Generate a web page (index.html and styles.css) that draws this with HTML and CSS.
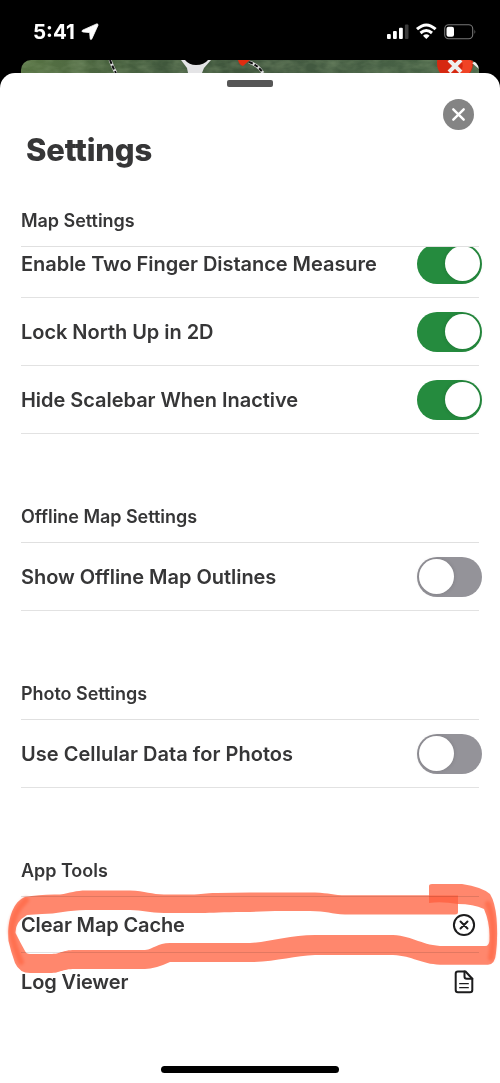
FILE: index.html
```html
<!DOCTYPE html>
<html lang="en">
<head>
<meta charset="utf-8">
<title>Settings</title>
<link rel="stylesheet" href="styles.css">
</head>
<body>
<div class="phone">
  <header class="status">
    <div class="clock"><span class="time">5:41</span>
      <svg class="arrow" width="18" height="18" viewBox="0 0 18 18"><path d="M15.600 .900 1.500 7.200Q.200 8.300 1.600 8.900L8 9.500Q8.600 9.500 8.700 10.200L9.200 15.900Q9.800 17.200 10.800 15.900L17 2.300Q17.200.600 15.600 .900Z" fill="#fff" stroke="#fff" stroke-width=".8"/></svg>
    </div>
    <svg class="signals" width="92" height="18" viewBox="0 0 92 18">
      <g fill="#fff"><rect x="1" y="11" width="3.8" height="5" rx="1"/><rect x="7" y="8" width="3.8" height="8" rx="1"/><rect x="13" y="4.700" width="3.800" height="11.300" rx="1"/></g>
      <rect x="18.900" y="1.500" width="3.600" height="14.500" rx="1" fill="#3b3b3b"/>
      <g fill="none" stroke="#fff" stroke-width="3"><path d="M31 6.200Q40.300 -2.300 49.600 6.200"/><path d="M34.500 10Q40.300 5 46 10"/></g>
      <path d="M37 12.700Q40.300 9.900 43.600 12.700L40.300 16Z" fill="#fff"/>
      <rect x="58.700" y="1.700" width="28" height="14" rx="4" fill="none" stroke="#777" stroke-width="1.100"/>
      <rect x="60.500" y="3.700" width="7.500" height="10" rx="2" fill="#fff"/><path d="M88.500 6.500Q90.100 8.700 88.500 11Z" fill="#777"/>
    </svg>
  </header>
  <svg class="map" width="458" height="13" viewBox="0 0 458 13">
    <defs>
      <linearGradient id="land"><stop stop-color="#587444"/><stop offset=".3" stop-color="#40583c"/><stop offset=".55" stop-color="#40563e"/><stop offset="1" stop-color="#4b6749"/></linearGradient>
      <filter id="terrain" x="0" y="0" width="100%" height="100%"><feTurbulence type="fractalNoise" baseFrequency=".06 .12" numOctaves="3" seed="4"/><feColorMatrix values="0 0 0 0 .33  0 0 0 0 .45  0 0 0 0 .25  1.4 0 0 0 -.45"/></filter>
    </defs>
    <rect width="458" height="13" fill="url(#land)"/>
    <rect width="458" height="13" filter="url(#terrain)" opacity=".45"/>
    <g fill="none"><path d="M89 0Q92 8 95 13M228 2Q237 5 242 13" stroke="#ddd" stroke-width="3"/><path d="M89 0Q92 8 95 13M228 2Q237 5 242 13" stroke="#111" stroke-width="2" stroke-dasharray="4 2"/></g>
    <path d="M160 0H190L183 8L181 13H167L166 8Z" fill="#e4e4e6"/><path d="M164 0H187Q183 5 175 5Q168 5 164 0Z" fill="#050505"/>
    <path d="M217 0H229L222 6Q218 5 217 0Z" fill="#e02c10"/>
    <circle cx="434" cy="3" r="18" fill="#d62810"/><path d="M440 0H450Q453 7 448 13H439Q444 6 440 0Z" fill="#f04325"/>
    <path d="m428 0 12 12m0-12-12 12" stroke="#eee" stroke-width="4"/><path d="m451 3 7 6V0Z" fill="#eee"/>
  </svg>
  <main class="sheet">
    <div class="handle"></div>
    <div class="topline">
      <h1>Settings</h1>
      <button class="close" aria-label="Close"><svg width="31" height="31" viewBox="0 0 31 31"><path d="m10.300 10.300 10.400 10.400m0-10.400-10.400 10.400" stroke="#fff" stroke-width="2.400" stroke-linecap="round"/></svg></button>
    </div>
    <section class="group first">
      <h2>Map Settings</h2>
      <div class="rows scrolled">
        <div class="row"><span>Enable Two Finger Distance Measure</span><i class="toggle on"></i></div>
        <div class="row"><span>Lock North Up in 2D</span><i class="toggle on"></i></div>
        <div class="row"><span>Hide Scalebar When Inactive</span><i class="toggle on"></i></div>
      </div>
    </section>
    <section class="group">
      <h2>Offline Map Settings</h2>
      <div class="row"><span>Show Offline Map Outlines</span><i class="toggle"></i></div>
    </section>
    <section class="group">
      <h2>Photo Settings</h2>
      <div class="row wide"><span>Use Cellular Data for Photos</span><i class="toggle"></i></div>
    </section>
    <section class="group tools">
      <h2>App Tools</h2>
      <div class="row"><span>Clear Map Cache</span>
        <svg class="icon" width="24" height="24" viewBox="0 0 24 24"><circle cx="12" cy="12" r="10.100"/><path d="m8.500 8.500 7 7m0-7-7 7"/></svg></div>
      <div class="row"><span>Log Viewer</span>
        <svg class="icon" width="24" height="24" viewBox="0 0 24 24"><path d="M12.500 1.500H6Q3.700 1.500 3.700 3.800V20Q3.700 22.300 6 22.300H18Q20.300 22.300 20.300 20V8.800L13.500 1.500Z"/><path d="M12.500 1.500V6.500Q12.500 8.800 14.800 8.800H20.300"/><path d="M7.700 13.700H16.300M7.700 17.700H16.300" stroke-width="1.300"/></svg></div>
    </section>
    <div class="home"></div>
  </main>
  <svg class="marker" width="500" height="100" viewBox="0 880 500 100">
    <path class="ink" fill-rule="evenodd" d="M25 897Q40 894 60 894.500C70 893 76 890.500 86 890.500H130C145 891 152 894.500 164 894.500H190C203 894.500 204 893 217 893L250 892.500H315C330 893 332 895.300 347 895.300H429V886Q429 884 432 884H462Q482 887 490 894Q495 902 496.500 918Q498 937 496 953Q495 964.700 488 964.700H440C421 964 413 956 393 955H315C295 955.500 275 962 250 962H170Q155 969 145 969H75C61 969 61 973 50 973H32Q20 974 15 963Q11 952 8.500 941C7 922 12 902 25 897ZM27 915Q15 922 15.500 933Q20 942 25 951Q26 954 30 954H50C62 954 61 950 75 950H145C154 949 157 943 170 943H250C270 942 290 935 315 935H393C414 936 422 946 444 946H485Q490 946 489.500 938Q490 923 484 909Q473 904 458 904V912Q458 914.500 455 914.500H345C331 914 327 911 310 911H275L250 912C230 912 216 912.500 205 913H164C149 913 143 910 130 910H86C68 910 57 914 42 914Z"/>
    <path class="overlap" d="M429 895.500H458V904Q441 901 429 903Z"/>
    <path class="edge" d="M26 900Q12 913 11.500 932Q14 947 21 962M488 904Q493 915 493 933Q493 947 491 958"/>
  </svg>
</div>
</body>
</html>
```

FILE: styles.css
```css
* { box-sizing: border-box; }
body { margin: 0; background: #000; font-family: Inter, "Liberation Sans", sans-serif; color: #363637; }
.phone { position: relative; width: 500px; height: 1083px; background: #000; overflow: hidden; display: flex; flex-direction: column; }
.status { height: 60px; flex: none; display: flex; justify-content: space-between; align-items: flex-start; padding: 22px 22px 0 33px; color: #fff; }
.clock { display: flex; gap: 6px; }
.time { font-size: 20.500px; line-height: 20px; font-weight: 700; }
.arrow { margin-top: 1px; }
.signals { margin-top: 1px; }
.map { display: block; flex: none; margin: 0 21px; border-radius: 10px 10px 0 0; }
.sheet { flex: 1; background: #fff; border-radius: 15px 15px 0 0; padding: 7px 21px 0; display: flex; flex-direction: column; }
.handle { width: 46px; height: 7px; flex: none; border-radius: 2px; background: #565656; align-self: center; }
.topline { height: 98px; flex: none; display: flex; justify-content: space-between; padding: 12px 5px 0; }
h1 { margin: 32px 0 0; font-size: 31px; line-height: 38px; font-weight: 800; letter-spacing: -.2px; }
.close { width: 31px; height: 31px; border: 0; padding: 0; border-radius: 50%; background: #848484; }
.close svg { display: block; }
.group { flex: none; margin-top: 57px; }
.first { margin-top: 10px; }
h2 { height: 52px; margin: 0; border-bottom: 1px solid #e0e0e0; font-size: 18px; line-height: 51px; font-weight: 600; letter-spacing: -.04px; }
.row { height: 68px; border-bottom: 1px solid #e2e2e2; display: flex; align-items: center; justify-content: space-between; font-size: 20px; font-weight: 600; letter-spacing: -.04px; white-space: nowrap; }
.wide { letter-spacing: .04px; }
.scrolled { clip-path: inset(17px -5px 0 0); margin-top: -17px; }
.toggle { width: 65.500px; height: 40px; margin-right: -3px; border-radius: 20px; background: #949399; padding: 2.500px; display: flex; }
.toggle::after { content: ""; width: 35px; height: 35px; border-radius: 50%; background: #fff; box-shadow: 0 0 4px #00000026; }
.toggle.on { background: #258b3e; justify-content: flex-end; }
.tools .row { height: 56px; letter-spacing: -.14px; }
.tools .row:last-child { border: 0; height: 58px; }
.icon { margin-right: 3px; fill: none; stroke: #1c1c1d; stroke-width: 2; stroke-linecap: round; stroke-linejoin: round; }
.home { width: 178px; height: 7px; flex: none; border-radius: 4px; background: #000; align-self: center; margin: auto 0 10px; }
.marker { position: absolute; left: 0; top: 880px; mix-blend-mode: multiply; pointer-events: none; }
.ink { fill: #ff876d; }
.overlap { fill: #ff6849; }
.edge { fill: none; stroke: #ff6441; stroke-width: 6; stroke-linecap: round; opacity: .65; filter: blur(1.500px); }
```
